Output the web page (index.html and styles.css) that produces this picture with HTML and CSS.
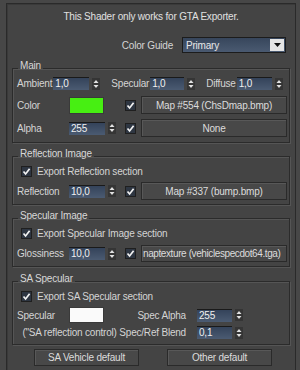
FILE: index.html
```html
<!DOCTYPE html>
<html lang="en">
<head>
  <meta charset="UTF-8" />
  <title>GTA Shader</title>
  <link rel="stylesheet" href="styles.css">
</head>
<body>
  <svg class="defs" width="0" height="0">
    <symbol id="arrows" viewBox="0 0 8 12">
      <rect width="8" height="12" fill="#353535" />
      <polygon points="1.5,5 4,2 6.5,5" fill="#e2e2e2" />
      <polygon points="1.5,7 4,10 6.5,7" fill="#e2e2e2" />
    </symbol>
    <symbol id="tick" viewBox="0 0 11 11">
      <rect x="0.5" y="0.5" width="10" height="10" fill="#2e3642" stroke="#1f1f1f" />
      <path d="M2.5 5.5 L4.6 8 L8.6 2.8" stroke="#f2f2f2" stroke-width="1.7" fill="none" />
    </symbol>
  </svg>

  <div class="rollout">
    <div class="note">This Shader only works for GTA Exporter.</div>

    <div class="guide">
      <span>Color Guide</span>
      <div class="select">
        <span>Primary</span>
        <span class="drop"><svg width="7" height="4" viewBox="0 0 7 4"><polygon points="0,0 7,0 3.5,4" fill="#111" /></svg></span>
      </div>
    </div>

    <fieldset class="group main">
      <legend>Main</legend>
      <div class="trio">
        <div class="pair">Ambient <span class="spin"><span class="field w36">1,0</span><svg class="arr"><use href="#arrows" /></svg></span></div>
        <div class="pair">Specular <span class="spin"><span class="field w34">1,0</span><svg class="arr"><use href="#arrows" /></svg></span></div>
        <div class="pair">Diffuse <span class="spin"><span class="field w35">1,0</span><svg class="arr"><use href="#arrows" /></svg></span></div>
      </div>
      <div class="maprow first">
        <span>Color</span>
        <span class="swatch green"></span>
        <svg class="chk"><use href="#tick" /></svg>
        <button>Map #554 (ChsDmap.bmp)</button>
      </div>
      <div class="maprow">
        <span>Alpha</span>
        <span class="spin"><span class="field w36">255</span><svg class="arr"><use href="#arrows" /></svg></span>
        <svg class="chk"><use href="#tick" /></svg>
        <button>None</button>
      </div>
    </fieldset>

    <fieldset class="group">
      <legend>Reflection Image</legend>
      <div class="check"><svg class="chk"><use href="#tick" /></svg>Export Reflection section</div>
      <div class="maprow">
        <span>Reflection</span>
        <span class="spin"><span class="field w36">10,0</span><svg class="arr"><use href="#arrows" /></svg></span>
        <svg class="chk"><use href="#tick" /></svg>
        <button>Map #337 (bump.bmp)</button>
      </div>
    </fieldset>

    <fieldset class="group">
      <legend>Specular Image</legend>
      <div class="check"><svg class="chk"><use href="#tick" /></svg>Export Specular Image section</div>
      <div class="maprow wide">
        <span>Glossiness</span>
        <span class="spin"><span class="field w36">10,0</span><svg class="arr"><use href="#arrows" /></svg></span>
        <svg class="chk"><use href="#tick" /></svg>
        <button class="clip">naptexture (vehiclespecdot64.tga)</button>
      </div>
    </fieldset>

    <fieldset class="group sa">
      <legend>SA Specular</legend>
      <div class="check"><svg class="chk"><use href="#tick" /></svg>Export SA Specular section</div>
      <div class="sarow">
        <span>Specular</span>
        <span class="swatch white"></span>
        <span class="right">Spec Alpha</span>
        <span class="spin"><span class="field w35">255</span><svg class="arr"><use href="#arrows" /></svg></span>
      </div>
      <div class="sarow blend">
        <span class="right span3">("SA reflection control) Spec/Ref Blend</span>
        <span class="spin"><span class="field w35">0,1</span><svg class="arr"><use href="#arrows" /></svg></span>
      </div>
    </fieldset>

    <div class="defaults">
      <button>SA Vehicle default</button>
      <button>Other default</button>
    </div>
  </div>
</body>
</html>
```

FILE: styles.css
```css
body { margin: 0; padding: 3px 4px 0 6px; background: #474747; color: #d4d4d4; font: 10px "Liberation Sans", Arial, sans-serif; letter-spacing: -0.2px; }
.defs { position: absolute; }
.rollout { border: 1px solid #2a2a2a; border-bottom: 0; padding: 0 5px; background: #444; min-height: 367px; box-sizing: border-box; box-shadow: inset 1px 1px 0 #3a3a3a; }

.note { text-align: center; line-height: 12px; margin-top: 7px; color: #e0e0e0; }
.guide { display: flex; justify-content: flex-end; align-items: center; gap: 9px; margin-top: 14px; padding-right: 4px; }
.select { width: 104px; height: 16px; box-sizing: border-box; border: 1px solid #1c1c1c; background: linear-gradient(#37465c, #4a5a71); display: flex; align-items: center; justify-content: space-between; padding: 0 1px 0 3px; color: #e8e8e8; }
.drop { width: 14px; height: 12px; background: #e6e6e6; display: flex; align-items: center; justify-content: center; }

/* group boxes: legend text sits a little above the etched line */
.group { margin: 5px 0 0; padding: 0 2px 4px 4px; border: 1px solid #2b2b2b; box-shadow: 1px 1px 0 #555, inset 1px 1px 0 #555; min-width: 0; }
.group.main { margin-top: 7px; padding-bottom: 5px; }
.group.sa { margin-top: 6px; padding-bottom: 5px; }
legend { padding: 0 2px 5px; margin-left: 1px; line-height: 12px; color: #d8d8d8; }

.spin { display: flex; align-items: center; gap: 3px; }
.field { height: 13px; box-sizing: border-box; background: linear-gradient(#34435a, #4b5b72); border-top: 1px solid #1a1a1a; padding-left: 2px; line-height: 12px; color: #f0f0f0; }
.w34 { width: 34px; }
.w35 { width: 35px; }
.w36 { width: 36px; }
.arr { width: 8px; height: 12px; }
.chk { width: 11px; height: 11px; }

.trio { display: flex; gap: 11px; height: 13px; }
.pair { display: flex; align-items: center; gap: 1px; }

.maprow { display: grid; grid-template-columns: 52px 56px 16px 1fr; align-items: center; height: 18px; margin-top: 5px; }
.maprow.first { margin-top: 6px; }
.maprow.wide { margin-top: 6px; height: 17px; }
.maprow button { height: 100%; }

button { background: #484848; border: 1px solid #2a2a2a; box-shadow: inset 1px 1px 0 #585858; color: #dcdcdc; font: inherit; letter-spacing: inherit; padding: 0; }
button.clip { text-align: left; overflow: hidden; white-space: nowrap; padding-left: 1px; letter-spacing: -0.4px; }

.swatch { width: 35px; height: 17px; box-sizing: border-box; border: 1px solid #3a3a3a; }
.green { background: #47ef12; }
.white { background: #fafafa; height: 16px; }

.check { display: flex; align-items: center; gap: 5px; padding-left: 4px; height: 12px; }

.sarow { display: grid; grid-template-columns: 52px 35px 82px auto; align-items: center; height: 16px; margin-top: 5px; }
.sarow .spin { margin-left: 11px; }
.sarow.blend { height: 13px; margin-top: 3px; }
.right { text-align: right; white-space: nowrap; }
.span3 { grid-column: 1 / 4; }

.defaults { display: flex; justify-content: center; gap: 28px; margin-top: 4px; padding-left: 4px; }
.defaults button { width: 105px; height: 17px; }
```
